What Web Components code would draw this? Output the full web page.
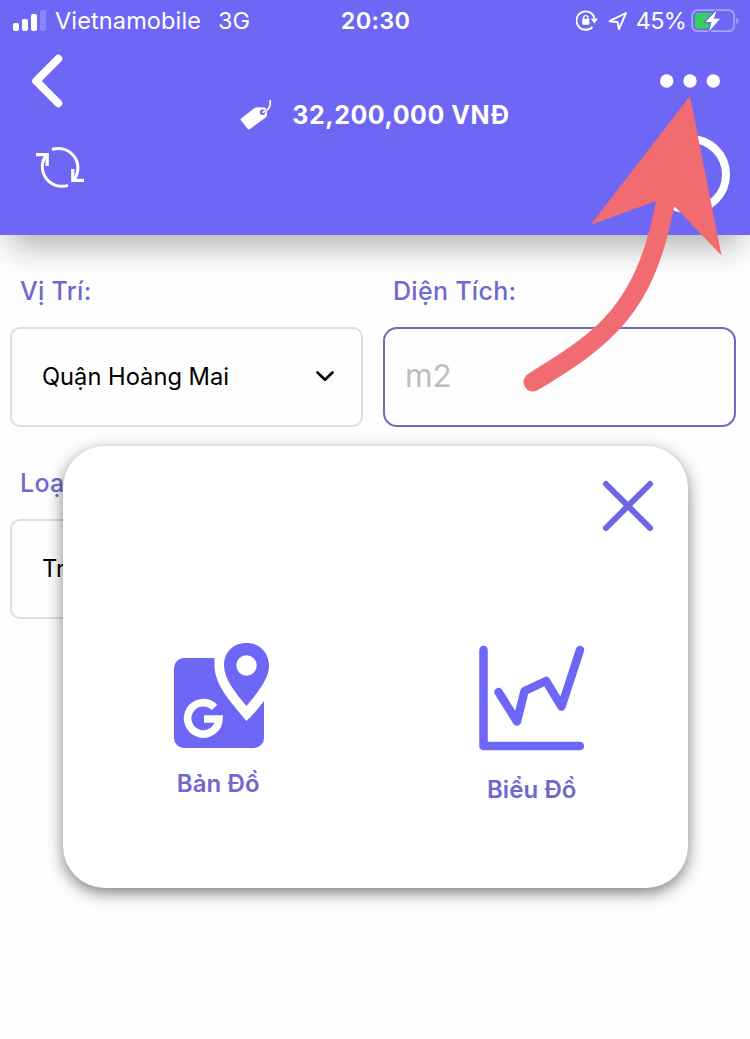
<!DOCTYPE html>
<html lang="vi">
<head>
<meta charset="utf-8">
<title>Định giá</title>
<style>
html,body{margin:0;padding:0;background:#fefefe}
body{width:750px;height:1039px;overflow:hidden;font-family:Inter,"Noto Sans",sans-serif}
</style>
</head>
<body>
<price-screen></price-screen>
<script>
const define = (name, html) => customElements.define(name, class extends HTMLElement {
  constructor() {
    super();
    this.attachShadow({mode: 'open'}).innerHTML = '<style>*{box-sizing:border-box}svg{display:block}</style>' + html;
  }
});

define('status-bar', `
<style>
:host{display:grid;grid-template-columns:1fr auto 1fr;align-items:center;height:41px;padding:0 11px 0 13px;color:#fff;font-size:23.5px;line-height:40px}
.l,.r{display:flex;align-items:center}
.r{justify-content:flex-end}
.car{margin-left:9px;letter-spacing:.13px}
.net{margin-left:17px;letter-spacing:-.1px}
.time{font-weight:600;letter-spacing:.25px;margin-right:1px}
.pct{margin:0 5px 0 8px;letter-spacing:-.8px}
</style>
<div class="l">
<svg width="33" height="22" viewBox="0 0 33 22" fill="#fff"><rect y="13" width="6" height="8" rx="2"/><rect x="9" y="9" width="6" height="12" rx="2"/><rect x="18" y="4" width="6" height="17" rx="2"/><rect x="27" width="6" height="21" rx="2" opacity=".2"/></svg>
<span class="car">Vietnamobile</span><span class="net">3G</span></div>
<span class="time">20:30</span>
<div class="r">
<svg width="22" height="22" viewBox="0 0 22 22"><path d="M18.5 8A9.200 9.200 0 1 0 16.500 16.800" fill="none" stroke="#fff" stroke-width="1.9"/><path d="M14.8 8.4H22L18.4 13.4Z" fill="#fff"/><path d="M7.6 9V7.8a2.2 2.2 0 0 1 4.4 0V9" fill="none" stroke="#fff" stroke-width="1.4"/><rect x="6.2" y="8.8" width="7.2" height="6" rx="1" fill="#fff"/></svg>
<svg style="margin-left:10px" width="20" height="20" viewBox="0 0 20 20"><path d="M1.5 10.2L18 2L11 18.2L9.6 11Z" fill="none" stroke="#fff" stroke-width="1.9" stroke-linejoin="round"/></svg>
<span class="pct">45%</span>
<svg width="48" height="26" viewBox="0 0 48 26"><rect x="1.2" y="2.2" width="42" height="21" rx="5.5" fill="none" stroke="#aaa5fa" stroke-width="1.7"/><path d="M45.3 9.5v7a4 4 0 0 0 0-7" fill="#aaa5fa"/><path d="M7 5H21V20.500H7Q4 20.500 4 17.500V8Q4 5 7 5Z" fill="#32d158"/><path d="M25.500 2.500L14.500 14H20.500L18 23.500L29 10.800H22.800Z" fill="#fff" stroke="#6e66f5" stroke-width="2.6" paint-order="stroke"/></svg>
</div>`);

define('price-tag', `
<style>
:host{display:flex;align-items:center;color:#fff;font-weight:700;font-size:25px;line-height:32px;letter-spacing:.54px}
span{margin-left:19px;white-space:nowrap}
</style>
<svg width="33" height="34" viewBox="0 0 33 34"><path d="M1 20.500L14 10.500Q16 9.200 18 9.200L24.500 9.600Q26 9.800 26.400 11.500L27.200 16Q27.400 18 26 19.300L10 31Q8.500 32 7.400 30.500L.8 22.200Q0 21.200 1 20.500Z" fill="#fff"/><circle cx="22.500" cy="14.300" r="2.700" fill="#6e66f5"/><path d="M22.500 14.400Q30.500 12 30.300 2.100" fill="none" stroke="#6e66f5" stroke-width="2.600"/><path d="M22.500 14.400Q31 12.400 30.300 2.100" fill="none" stroke="#fff" stroke-width="1.700"/></svg>
<span><slot></slot></span>`);

define('app-header', `
<style>
:host{display:block;height:235px;background:#6e66f5;box-shadow:0 21px 30px -10px rgba(0,0,0,.31)}
.nav{display:grid;grid-template-columns:1fr auto 1fr;height:194px}
.left{padding:13px 0 0 30px}
.refresh{margin:36px 0 0 5px}
.mid{padding:57px 0 0 0}
.right{display:flex;flex-direction:column;align-items:flex-end;padding:32px 20px 0 0}
.ring{width:79px;height:79px;border:8px solid #fff;border-radius:50%;margin-top:46px}
</style>
<status-bar></status-bar>
<div class="nav">
<div class="left">
<svg width="34" height="56" viewBox="0 0 34 56"><path d="M28.3 4.8L6.2 27L28.3 49.2" fill="none" stroke="#fff" stroke-width="8" stroke-linecap="round" stroke-linejoin="round"/></svg>
<svg class="refresh" width="50" height="44" viewBox="0 0 50 44" fill="none" stroke="#fff" stroke-width="3"><path d="M17 3.500A19.500 19.500 0 0 1 38.700 34M33 39.300A19.500 19.500 0 0 1 11.300 9"/><path d="M1 8.600H12.200V20M49 34.400H37.800V23" stroke-width="3.300"/></svg>
</div>
<div class="mid"><price-tag>32,200,000 VNĐ</price-tag></div>
<div class="right">
<svg width="70" height="16" viewBox="0 0 70 16" fill="#fff"><circle cx="6.7" cy="8" r="6.7"/><circle cx="30" cy="8" r="6.7"/><circle cx="53.3" cy="8" r="6.7"/></svg>
<div class="ring"></div>
</div>
</div>`);

define('form-field', `
<style>
:host{display:block;width:353px}
.label{padding-left:10px;height:51px;line-height:30px;font-size:25px;font-weight:500;color:#7067cf;letter-spacing:.3px}
.box{display:flex;align-items:center;justify-content:space-between;height:100px;padding:0 26px 1px 30px;border:2px solid #dedede;border-radius:10px;font-size:23.7px;background:#fefefe;color:#000}
:host([active]) .box{border-color:#7067c4;border-radius:14px;color:#bdbdbd;font-size:31.5px;padding-left:20px}
:host([active]) .box{padding-bottom:3px}
</style>
<div class="label"><slot name="label"></slot></div>
<div class="box"><slot></slot><slot name="icon"></slot></div>`);

define('menu-item', `
<style>
:host{display:flex;flex-direction:column;align-items:center}
.t{font-weight:600;font-size:24px;line-height:30px;color:#7067cf;white-space:nowrap;letter-spacing:.1px}
</style>
<slot name="icon"></slot><div class="t"><slot></slot></div>`);

define('menu-popup', `
<style>
:host{display:block;width:625px;height:442px;background:#fff;border-radius:42px;box-shadow:0 5px 16px rgba(0,0,0,.5)}
.top{display:flex;justify-content:flex-end;padding:33px 33px 0 0}
.items{display:grid;grid-template-columns:1fr 1fr;padding-top:110px}
.map{margin:0 0 20px 8px}
.chart{margin-bottom:24px}
.a{padding-right:2px}
</style>
<div class="top"><svg width="54" height="54" viewBox="0 0 54 54"><path d="M5 5L49 49M49 5L5 49" stroke="#6e66e8" stroke-width="6" stroke-linecap="round"/></svg></div>
<div class="items">
<menu-item class="a"><svg slot="icon" class="map" width="100" height="106" viewBox="0 0 100 106"><rect x="2" y="15" width="90" height="90" rx="10" fill="#6e66f5"/><path d="M42.5 0V22C42.5 43 60 60 74.4 78Q84 69 92 58L100 50V0Z" fill="#fff"/><path d="M74.4 63C63 49 52 36 52 22.5C52 9 61.5 0 74.4 0S97 9 97 22.5C97 36 86 49 74.4 63Z" fill="#6e66f5"/><circle cx="74.5" cy="22.5" r="10.2" fill="#fff"/><path d="M42.500 64.300A15.700 15.700 0 1 0 47 76H32" fill="none" stroke="#fff" stroke-width="7.6"/></svg>Bản Đồ</menu-item>
<menu-item><svg slot="icon" class="chart" width="106" height="108" viewBox="0 0 106 108" fill="none" stroke="#6e66f5" stroke-width="8.5" stroke-linecap="round" stroke-linejoin="round"><path d="M4.5 7V103H101M19.5 49L38 78.5L45.5 48L67 38L82.5 63.500L101 7"/></svg>Biểu Đồ</menu-item>
</div>`);

define('price-screen', `
<style>
:host{display:block;position:relative;width:750px;height:1039px;overflow:hidden;background:#fefefe}
.form{display:grid;grid-template-columns:353px 353px;column-gap:20px;row-gap:41px;padding:41px 10px 0}
menu-popup{position:absolute;left:63px;top:446px}
.arrow{position:absolute;left:510px;top:80px}
</style>
<app-header></app-header>
<div class="form">
<form-field><span slot="label">Vị Trí:</span>Quận Hoàng Mai<svg slot="icon" width="20" height="14" viewBox="0 0 20 14"><path d="M2.5 2.500L10 9.800L17.5 2.500" fill="none" stroke="#000" stroke-width="2.6" stroke-linecap="round" stroke-linejoin="round"/></svg></form-field>
<form-field active><span slot="label">Diện Tích:</span>m2</form-field>
<form-field><span slot="label">Loạ</span>Tr</form-field>
</div>
<menu-popup></menu-popup>
<svg class="arrow" width="230" height="330" viewBox="510 80 230 330"><path d="M690 96L721.5 255.5L675 207L656 201L590.5 225Z" fill="#f16c70"/><path d="M533 382C605 338 645 310 665.5 202" fill="none" stroke="#f16c70" stroke-width="19" stroke-linecap="round"/></svg>`);
</script>
</body>
</html>
